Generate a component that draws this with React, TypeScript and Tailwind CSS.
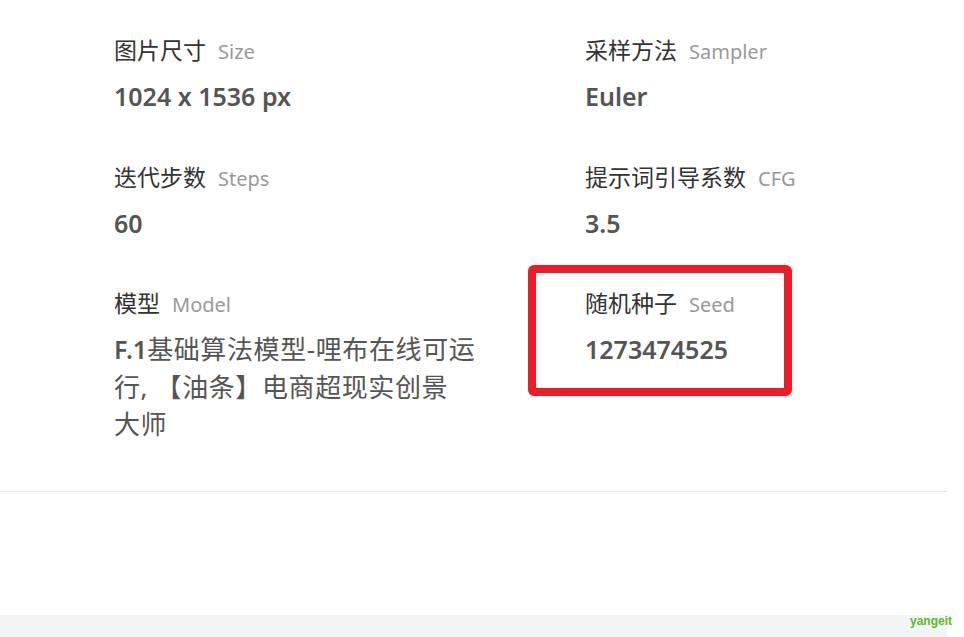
import React from 'react';

interface Param {
  label: string;
  en: string;
  value: React.ReactNode;
  marked?: boolean;
}

const params: Param[] = [
  { label: '图片尺寸', en: 'Size', value: '1024 x 1536 px' },
  { label: '采样方法', en: 'Sampler', value: 'Euler' },
  { label: '迭代步数', en: 'Steps', value: '60' },
  { label: '提示词引导系数', en: 'CFG', value: '3.5' },
  {
    label: '模型',
    en: 'Model',
    value: (
      <>
        <span className="font-semibold">F.1</span>
        <span className="font-normal text-[26px] tracking-[0.6px]">
          基础算法模型-哩布在线可运
          <br />
          行, 【油条】电商超现实创景
          <br />
          大师
        </span>
      </>
    ),
  },
  { label: '随机种子', en: 'Seed', value: '1273474525', marked: true },
];

export default function App() {
  return (
    <div
      className="relative w-[964px] h-[637px] bg-white overflow-hidden"
      style={{ fontFamily: '"Noto Sans", "Noto Sans CJK SC", sans-serif' }}
    >
      <main className="w-[947px] h-full flex flex-col">
        {/* PARAMETERS GRID */}
        <section className="pl-[114px] pt-[35px] pb-[47px] border-b border-[#e8e8e8]">
          <div className="grid grid-cols-[471px_1fr] gap-y-[46px]">
            {params.map((p) => (
              <div key={p.label} className="relative w-[400px]">
                {p.marked && (
                  <div className="absolute left-[-57px] top-[-23px] w-[264px] h-[131px] border-[8px] border-[#ee1c25] rounded-[6px]" />
                )}
                <div className="flex items-baseline gap-[12px] h-[30px] leading-[30px]">
                  <span className="text-[23px] text-[#333]">{p.label}</span>
                  <span className="text-[20px] text-[#999]">{p.en}</span>
                </div>
                <p className="mt-[13px] text-[25px] leading-[37.5px] font-semibold text-[#555]">{p.value}</p>
              </div>
            ))}
          </div>
        </section>

        <div className="flex-1" />
        <div className="h-[22px] bg-[#f3f4f6]" />
      </main>

      {/* watermark */}
      <span
        className="absolute left-[910px] top-[612px] text-[12px] font-bold text-[#5cb82a]"
        style={{ fontFamily: '"Liberation Sans", sans-serif' }}
      >
        yangeit
      </span>
    </div>
  );
}
